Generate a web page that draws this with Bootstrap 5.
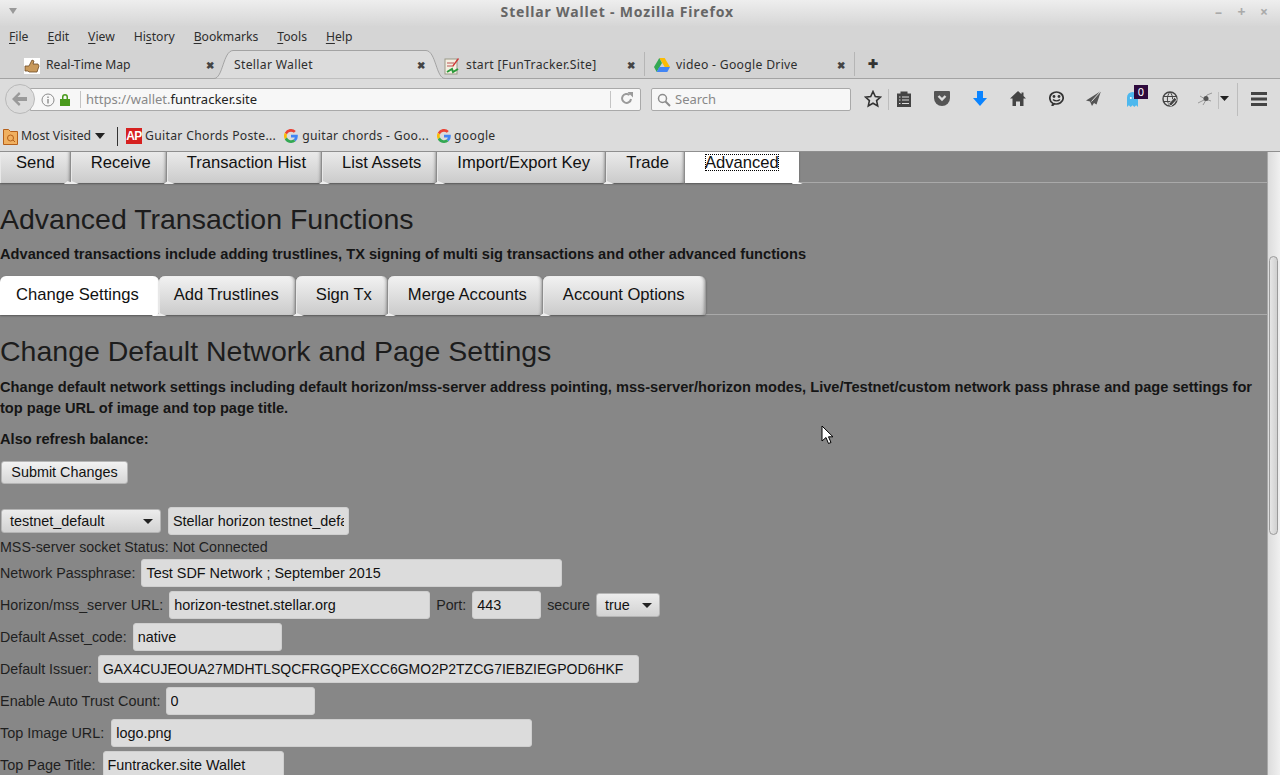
<!DOCTYPE html>
<html lang="en">
  <head>
    <meta charset="UTF-8" />
    <title>Stellar Wallet - Mozilla Firefox</title>
    <link href="https://cdn.jsdelivr.net/npm/bootstrap@5.3.2/dist/css/bootstrap.min.css" rel="stylesheet" />
    <style>
      html, body { height: 775px; overflow: hidden; background: #878787; }
      .ff-window { width: 1280px; height: 775px; font-family: "Noto Sans", sans-serif; font-size: 12.2px; color: #2e2e2e; }
      .ff-titlebar { height: 26px; background: linear-gradient(#eeeeee, #d6d6d6); padding: 0 9px 3px 8px; }
      .ff-title { flex: 1; text-align: center; font-size: 14px; font-weight: 700; color: #666; letter-spacing: 0.84px; padding-left: 13px; }
      .ff-winbtn { color: #aaa; font-size: 14px; font-weight: 700; margin-left: 11.5px; width: 11px; line-height: 1; }
      .ff-menubar { height: 24px; background: #d5d5d5; padding: 0 0 2px 9px; gap: 18.9px; }
      .ff-menubar u { text-underline-offset: 2px; }
      .ff-tabstrip { height: 29px; background: #d3d3d3; border-bottom: 1px solid #a3a3a3; padding-left: 24px; }
      .ff-tab { height: 28px; flex: none; position: relative; padding-top: 3px; }
      .ff-tab-x { font-size: 10px; font-weight: 700; color: #444; margin-left: auto; }
      .ff-tab1 { width: 193px; padding-right: 3px; }
      .ff-tab2 { width: 231px; margin-left: -3px; padding-left: 20px; padding-right: 20px; }
      .ff-tab3 { width: 202px; margin-left: -3px; padding-left: 2px; padding-right: 9px; }
      .ff-tab4 { width: 210px; padding-left: 9px; padding-right: 9px; border-left: 1px solid #b5b5b5; height: 24px; padding-top: 2px; }
      .ff-tab-curve { position: absolute; left: 0; top: 0; z-index: 0; }
      .ff-tab2 span { position: relative; z-index: 1; }
      .ff-tab-label { margin-left: 6px; }
      .ff-wide { letter-spacing: 0.3px; }
      .ff-newtab { border-left: 1px solid #b5b5b5; height: 24px; padding-left: 13px; font-weight: 700; font-size: 12px; color: #333; }
      .ff-navbar { height: 41px; background: #dcdcdc; position: relative; }
      .ff-back { position: absolute; left: 5px; top: 5px; width: 30px; height: 30px; border-radius: 50%; background: #dcdcdc; border: 1px solid #b9b9b9; z-index: 2; }
      .ff-urlbar { margin-left: 30px; width: 611px; height: 23px; background: #f7f7f7; border: 1px solid #a9a9a9; border-radius: 0 2px 2px 0; padding-left: 10px; font-size: 13px; }
      .ff-url { border-left: 1px solid #c4c4c4; padding-left: 5px; margin-left: 9px; color: #888; height: 17px; line-height: 17px; }
      .ff-url b { font-weight: 400; color: #222; }
      .ff-reload { margin-left: auto; border-left: 1px solid #c4c4c4; height: 17px; width: 30px; padding-left: 9px; }
      .ff-search { margin-left: 10px; width: 200px; height: 23px; background: #f7f7f7; border: 1px solid #a9a9a9; border-radius: 2px; padding-left: 5px; color: #888; gap: 4px; font-size: 13px; }
      .ff-tools { flex: 1; position: relative; height: 41px; }
      .ff-ico { position: absolute; top: 11px; }
      .ff-vsep { position: absolute; width: 1px; background: #bdbdbd; }
      .ff-badge { position: absolute; left: 283px; top: 6px; width: 14px; height: 14px; background: #2e0a3d; color: #fff; font-size: 11px; line-height: 14px; text-align: center; }
      .ff-bookmarks { height: 32px; background: #dcdcdc; border-bottom: 1px solid #8f8f8f; padding: 1px 0 0 3px; }
      .ff-bm-sep { width: 1px; height: 19px; background: #333; margin: 0 8px 0 12px; }
      .ff-ap { width: 16px; height: 16px; background: #d6201f; color: #fff; font: 700 12px/16px "Liberation Sans", sans-serif; text-align: center; letter-spacing: -0.5px; }
      .ff-gap3 { margin-left: 3px; }
      .ff-page { flex: 1; min-height: 0; position: relative; background: #878787; overflow: hidden; font-family: "Liberation Sans", Arial, sans-serif; font-size: 14.25px; color: #1f1f1f; }
      .ff-scroll { width: 13px; background: linear-gradient(90deg, #dcdcdc, #f0f0f0); padding: 104px 2px 0 1px; border-left: 1px solid #a8a8a8; }
      .ff-thumb { height: 279px; border: 1px solid #9a9a9a; border-radius: 5px; background: linear-gradient(90deg, #e6e6e6, #d0d0d0); }
      .wallet-body { margin-top: -8px; flex: 1; min-width: 0; }
      .wallet-tabs { border-bottom: 1px solid #a9a9a9; height: 39px; }
      .wallet-tab { height: 39px; padding: 0 15px 0 20px; font-size: 16.6px; color: #111; line-height: 37px; background: linear-gradient(#f2f2f2, #cbcbcb); border-right: 1px solid #9c9c9c; border-radius: 6px 6px 3px 0; position: relative; box-shadow: inset 1px 0 0 #e8e8e8, inset -3px 0 3px -2px rgba(0, 0, 0, 0.3), 0 1px 2px rgba(0, 0, 0, 0.35); }
      .wallet-tab::after { content: ""; position: absolute; left: -3px; bottom: -1px; width: 11px; height: 3px; background: #eee; clip-path: polygon(35% 0, 100% 100%, 0 100%); }
      .wallet-tab.on { background: #fff; border-right-color: #fff; padding-right: 19px; box-shadow: 0 1px 2px rgba(0, 0, 0, 0.35); }
      .wallet-tab.on::after { left: auto; right: -5px; background: #fff; }
      .wallet-tab.first { padding-left: 16px; }
      .wallet-tab.first::after { left: auto; right: -5px; }
      .wallet-tab.after-on { padding-left: 15px; padding-right: 16px; }
      .wallet-tab.last { padding-right: 20px; }
      .tab-focus { outline: 1px dotted #000; outline-offset: -1px; line-height: 17px; display: inline-block; }
      .wallet-h { font-size: 28.5px; font-weight: 400; line-height: 32px; margin: 20px 0 0; color: #1c1c1c; }
      .wallet-lead { font-size: 14.63px; font-weight: 700; line-height: 21px; margin: 0; color: #151515; }
      .wallet-btn { height: 23px; width: 127px; margin: 11px 0 0 1px; padding: 0; font-size: 14.4px; line-height: 21px; border: 1px solid #b5b5b5; border-radius: 3px; background: linear-gradient(#f2f2f2, #d6d6d6); color: #111; }
      .wallet-row { height: 32px; white-space: nowrap; gap: 6px; padding-top: 1px; }
      .row-big { font-size: 14.45px; gap: 7px; }
      .row-big.row-count { gap: 5px; }
      .wallet-input { height: 28px; font: 14.4px "Liberation Sans", Arial, sans-serif; color: #111; background: #dcdcdc; border: 1px solid #cfcfcf; border-radius: 3px; padding: 0 4px; outline: 0; }
      .wallet-row .wallet-input, .wallet-row .wallet-select { margin-top: -1px; }
      .wallet-select { position: relative; height: 24px; line-height: 23px; background: linear-gradient(#ececec, #d2d2d2); border: 1px solid #b5b5b5; border-radius: 3px; padding-left: 8px; color: #111; font-size: 14.4px; }
      .wallet-select::after { content: ""; position: absolute; right: 7px; top: 9px; border: 5px solid transparent; border-top-color: #222; border-bottom: 0; }
      .select-net { width: 160px; margin-left: 1px; } .select-secure { width: 64px; }
      .net-row { height: 28px; margin-top: 23px; } .status-row { height: 22px; padding-top: 3px; white-space: nowrap; }
      .w-pass { width: 421px; } .w-url { width: 261px; } .w-port { width: 69px; } .w-asset { width: 149px; }
      .w-issuer { width: 541px; font-size: 14px; } .w-count { width: 149px; } .w-image { width: 421px; } .w-title { width: 181px; } .w-net { width: 181px; margin-left: 7px; }
      .lead-a { margin-top: 9px; } .lead-b { margin-top: 10px; } .lead-c { margin-top: 10px; } .tabs-b { margin-top: 11px; }
      .ff-cursor { position: absolute; left: 821px; top: 273px; }
    </style>
  </head>
  <body>
    <div class="ff-window d-flex flex-column">
      <div class="ff-titlebar d-flex align-items-center">
        <svg width="10" height="7" viewBox="0 0 10 7"><path d="M1 0h8L5 6z" fill="#999"/></svg>
        <div class="ff-title">Stellar Wallet - Mozilla Firefox</div>
        <span class="ff-winbtn">–</span><span class="ff-winbtn">+</span><span class="ff-winbtn">×</span>
      </div>
      <div class="ff-menubar d-flex align-items-center">
        <span><u>F</u>ile</span><span><u>E</u>dit</span><span><u>V</u>iew</span><span>Hi<u>s</u>tory</span><span><u>B</u>ookmarks</span><span><u>T</u>ools</span><span><u>H</u>elp</span>
      </div>
      <div class="ff-tabstrip d-flex align-items-center">
        <div class="ff-tab ff-tab1 d-flex align-items-center">
          <svg width="16" height="16" viewBox="0 0 16 16"><rect width="16" height="16" fill="#fff"/><path d="M1 8h4l3-6 2 1-1 3h5l1 2-2 6H5l-1-1H1z" fill="#c99a5c" stroke="#6d4a25" stroke-width=".8"/></svg>
          <span class="ff-tab-label">Real-Time Map</span><span class="ff-tab-x">✖</span>
        </div>
        <div class="ff-tab ff-tab2 d-flex align-items-center">
          <svg class="ff-tab-curve" width="231" height="29" viewBox="0 0 231 29"><path d="M0 28.5C9 28.5 9 1 19 .5H212C222 1 222 28.5 231 28.5" fill="#dcdcdc" stroke="#a3a3a3"/></svg>
          <span class="ff-wide">Stellar Wallet</span><span class="ff-tab-x">✖</span>
        </div>
        <div class="ff-tab ff-tab3 d-flex align-items-center">
          <svg width="16" height="18" viewBox="0 0 16 18"><rect x="1" y="2" width="12" height="15" fill="#f4efe2" stroke="#998"/><path d="M3 6h7M3 9h5" stroke="#b55"/><path d="M3 15l5-3 1 3 5-3" stroke="#2a9a3a" stroke-width="2" fill="none"/><path d="M8 9l6-8 1 1-6 8z" fill="#c33"/></svg>
          <span class="ff-tab-label ff-wide">start [FunTracker.Site]</span><span class="ff-tab-x">✖</span>
        </div>
        <div class="ff-tab ff-tab4 d-flex align-items-center">
          <svg width="16" height="14" viewBox="0 0 16 14"><path d="M5.300 0h5.400L16 9h-5.300z" fill="#fbbc04"/><path d="M5.300 0L0 9l2.700 5L8 5z" fill="#34a853"/><path d="M2.700 14h10.600L16 9H5.300z" fill="#4285f4"/></svg>
          <span class="ff-tab-label ff-wide">video - Google Drive</span><span class="ff-tab-x">✖</span>
        </div>
        <div class="ff-newtab d-flex align-items-center">✚</div>
      </div>
      <div class="ff-navbar d-flex align-items-center">
        <div class="ff-back d-flex align-items-center justify-content-center">
          <svg width="16" height="14" viewBox="0 0 16 14"><path d="M7 0L0 7l7 7 1.500-2L5.500 9H15V5H5.500l3-3z" fill="#9a9a9a"/></svg>
        </div>
        <div class="ff-urlbar d-flex align-items-center">
          <svg width="14" height="14" viewBox="0 0 14 14"><circle cx="7" cy="7" r="6" fill="none" stroke="#8c8c8c"/><path d="M6.300 6h1.400v4.500H6.300zM6.300 3.500h1.400v1.400H6.300z" fill="#8c8c8c"/></svg>
          <svg class="ms-1" width="12" height="14" viewBox="0 0 12 14"><path d="M3 6V4a3 3 0 016 0v2h2v7H1V6zM4.500 6h3V4a1.500 1.500 0 00-3 0z" fill="#4a9a1d" fill-rule="evenodd"/></svg>
          <div class="ff-url">https://wallet.<b>funtracker.site</b></div>
          <div class="ff-reload"><svg class="d-block" width="13" height="14" viewBox="0 0 13 14"><path d="M11 8a4.500 4.500 0 11-1.500-4" fill="none" stroke="#9a9a9a" stroke-width="2"/><path d="M7.500 1H13v5.500z" fill="#9a9a9a"/></svg></div>
        </div>
        <div class="ff-search d-flex align-items-center">
          <svg width="14" height="14" viewBox="0 0 14 14"><circle cx="5.500" cy="5.500" r="4" fill="none" stroke="#8c8c8c" stroke-width="1.500"/><path d="M8.500 8.500L13 13" stroke="#8c8c8c" stroke-width="2"/></svg>
          <span>Search</span>
        </div>
        <div class="ff-tools">
          <svg class="ff-ico" style="left:13px" width="18" height="18" viewBox="0 0 18 18"><path d="M9 1.500l2.300 5 5.200.6-3.900 3.500 1.100 5.300L9 13.200 4.300 15.900l1.100-5.300L1.500 7.100l5.200-.6z" fill="none" stroke="#333" stroke-width="1.600"/></svg>
          <div class="ff-vsep" style="left:37px;top:10px;height:21px"></div>
          <svg class="ff-ico" style="left:46px;top:12px" width="14" height="16" viewBox="0 0 14 16"><path d="M0 2.500h3.500V.5h7v2H14V16H0z" fill="#444"/><path d="M5 6h7M5 9h7M5 12.500h7M2 6h1.500M2 9h1.500M2 12.500h1.500" stroke="#ddd"/></svg>
          <svg class="ff-ico" style="left:83px;top:12px" width="16" height="15" viewBox="0 0 16 15"><path d="M1 0h14a1 1 0 011 1v6a8 8 0 01-16 0V1a1 1 0 011-1z" fill="#555"/><path d="M4.500 5l3.500 3.500L11.500 5" fill="none" stroke="#dcdcdc" stroke-width="2.400"/></svg>
          <svg class="ff-ico" style="left:122px;top:12px" width="14" height="15" viewBox="0 0 14 15"><path d="M4 0h6v7h4l-7 8-7-8h4z" fill="#0a84ff"/></svg>
          <svg class="ff-ico" style="left:159px;top:12px" width="16" height="15" viewBox="0 0 16 15"><path d="M8 0L0 7.500h2.500V15H6v-4.500h4V15h3.500V7.500H16l-2.500-2.400V1.500h-2v1.700z" fill="#444"/></svg>
          <svg class="ff-ico" style="left:198px;top:12px" width="15" height="15" viewBox="0 0 15 15"><path d="M4 12.500C1.500 11 .8 9 .8 7A6.700 6 0 0114.200 7a6.700 6 0 01-8.700 5.700L3 15z" fill="#dcdcdc" stroke="#333" stroke-width="1.700"/><circle cx="5" cy="5.500" r="1.400" fill="#333"/><circle cx="10" cy="5.500" r="1.400" fill="#333"/><path d="M4 8.500c1.800 1.800 5.200 1.800 7 0" stroke="#333" stroke-width="1.300" fill="none"/></svg>
          <svg class="ff-ico" style="left:235px;top:12px" width="15" height="15" viewBox="0 0 15 15"><path d="M15 0L0 9.500l4 1 2 4.500 2-3 2.500 1.500z" fill="#555"/><path d="M15 0L5.500 10.500" stroke="#ddd"/></svg>
          <svg class="ff-ico" style="left:276px;top:13px" width="11" height="15" viewBox="0 0 11 15"><path d="M0 5.500a5.500 5.500 0 0111 0V15l-1.800-1.700L7.300 15 5.500 13.300 3.700 15l-1.900-1.700L0 15z" fill="#4db8ee"/><circle cx="3.800" cy="6" r="1" fill="#fff"/><circle cx="7.500" cy="6" r="1" fill="#fff"/></svg>
          <div class="ff-badge">0</div>
          <svg class="ff-ico" style="left:311px;top:12px" width="16" height="16" viewBox="0 0 16 16"><circle cx="8" cy="8" r="7" fill="none" stroke="#444" stroke-width="1.400"/><path d="M1.500 5.500h13M1.500 10.500h13M8 1C4.500 5 4.500 11 8 15M8 1c3.500 4 3.500 10 0 14" fill="none" stroke="#444"/><path d="M6.500 13l6-6.500 2.500 2L9 15z" fill="#444" stroke="#dcdcdc" stroke-width=".9"/></svg>
          <svg class="ff-ico" style="left:346px;top:13px" width="16" height="14" viewBox="0 0 16 14"><path d="M1 11l6-3 3-5 5-2M3 4l5 3 6 2M6 13l3-5" stroke="#999" fill="none"/><circle cx="9" cy="6.500" r="2.500" fill="#555"/></svg>
          <div class="ff-vsep" style="left:367px;top:13px;height:17px"></div>
          <svg class="ff-ico" style="left:369px;top:17px" width="9" height="5" viewBox="0 0 9 5"><path d="M0 0h9L4.500 5z" fill="#222"/></svg>
          <div class="ff-vsep" style="left:386px;top:4px;height:33px"></div>
          <svg class="ff-ico" style="left:400px;top:13px" width="16" height="14" viewBox="0 0 16 14"><path d="M0 1.500h16M0 7h16M0 12.500h16" stroke="#444" stroke-width="3"/></svg>
        </div>
      </div>
      <div class="ff-bookmarks d-flex align-items-center">
        <svg width="15" height="17" viewBox="0 0 15 17"><path d="M.5 1.500h5l2 2h7v13H.5z" fill="#f0b060" stroke="#b5601a"/><circle cx="7.500" cy="10" r="3" fill="none" stroke="#b5601a"/><path d="M10 12l2 2" stroke="#b5601a"/></svg>
        <span class="ff-gap3">Most Visited</span>
        <svg class="ms-1" width="10" height="6" viewBox="0 0 10 6"><path d="M0 0h10L5 6z" fill="#222"/></svg>
        <div class="ff-bm-sep"></div>
        <div class="ff-ap">AP</div>
        <span class="ff-gap3 ff-wide">Guitar Chords Poste...</span>
        <svg class="ms-2" width="14" height="14" viewBox="0 0 14 14"><path d="M7 2.700a4.300 4.300 0 012.900 1.100l1.900-1.900A7 7 0 00.800 3.800L3 5.500A4.200 4.200 0 017 2.700z" fill="#ea4335"/><path d="M13.800 7.200c0-.5 0-1-.1-1.400H7v2.700h3.800a3.200 3.200 0 01-1.400 2.100l2.200 1.700a6.700 6.700 0 002.200-5.100z" fill="#4285f4"/><path d="M3 8.500a4.200 4.200 0 010-3L.8 3.800a7 7 0 000 6.400z" fill="#fbbc05"/><path d="M7 14a6.800 6.800 0 004.600-1.700l-2.200-1.700A4.300 4.300 0 013 8.500L.8 10.200A7 7 0 007 14z" fill="#34a853"/></svg>
        <span class="ms-1 ff-wide">guitar chords - Goo...</span>
        <svg class="ms-2" width="14" height="14" viewBox="0 0 14 14"><path d="M7 2.700a4.300 4.300 0 012.900 1.100l1.900-1.900A7 7 0 00.800 3.800L3 5.500A4.200 4.200 0 017 2.700z" fill="#ea4335"/><path d="M13.800 7.200c0-.5 0-1-.1-1.400H7v2.700h3.800a3.200 3.200 0 01-1.400 2.100l2.200 1.700a6.700 6.700 0 002.200-5.100z" fill="#4285f4"/><path d="M3 8.500a4.200 4.200 0 010-3L.8 3.800a7 7 0 000 6.400z" fill="#fbbc05"/><path d="M7 14a6.800 6.800 0 004.600-1.700l-2.200-1.700A4.300 4.300 0 013 8.500L.8 10.200A7 7 0 007 14z" fill="#34a853"/></svg>
        <span class="ff-gap3 ff-wide">google</span>
      </div>
      <div class="ff-page d-flex">
        <div class="wallet-body">
          <div class="wallet-tabs d-flex">
            <div class="wallet-tab first">Send</div>
            <div class="wallet-tab">Receive</div>
            <div class="wallet-tab">Transaction Hist</div>
            <div class="wallet-tab">List Assets</div>
            <div class="wallet-tab">Import/Export Key</div>
            <div class="wallet-tab">Trade</div>
            <div class="wallet-tab on"><span class="tab-focus">Advanced</span></div>
          </div>
          <h1 class="wallet-h">Advanced Transaction Functions</h1>
          <p class="wallet-lead lead-a">Advanced transactions include adding trustlines, TX signing of multi sig transactions and other advanced functions</p>
          <div class="wallet-tabs tabs-b d-flex">
            <div class="wallet-tab on first">Change Settings</div>
            <div class="wallet-tab after-on">Add Trustlines</div>
            <div class="wallet-tab">Sign Tx</div>
            <div class="wallet-tab">Merge Accounts</div>
            <div class="wallet-tab last">Account Options</div>
          </div>
          <h2 class="wallet-h">Change Default Network and Page Settings</h2>
          <p class="wallet-lead lead-b">Change default network settings including default horizon/mss-server address pointing, mss-server/horizon modes, Live/Testnet/custom network pass phrase and page settings for top page URL of image and top page title.</p>
          <p class="wallet-lead lead-c">Also refresh balance:</p>
          <button class="wallet-btn d-block">Submit Changes</button>
          <div class="net-row d-flex align-items-center">
            <div class="wallet-select select-net">testnet_default</div>
            <input class="wallet-input w-net" value="Stellar horizon testnet_default" />
          </div>
          <div class="status-row d-flex align-items-center">MSS-server socket Status: Not Connected</div>
          <div class="wallet-row d-flex align-items-center">Network Passphrase: <input class="wallet-input w-pass" value="Test SDF Network ; September 2015" /></div>
          <div class="wallet-row d-flex align-items-center">Horizon/mss_server URL: <input class="wallet-input w-url" value="horizon-testnet.stellar.org" /> Port: <input class="wallet-input w-port" value="443" /> secure <div class="wallet-select select-secure">true</div></div>
          <div class="wallet-row d-flex align-items-center">Default Asset_code: <input class="wallet-input w-asset" value="native" /></div>
          <div class="wallet-row d-flex align-items-center">Default Issuer: <input class="wallet-input w-issuer" value="GAX4CUJEOUA27MDHTLSQCFRGQPEXCC6GMO2P2TZCG7IEBZIEGPOD6HKF" /></div>
          <div class="wallet-row row-big row-count d-flex align-items-center">Enable Auto Trust Count: <input class="wallet-input w-count" value="0" /></div>
          <div class="wallet-row row-big d-flex align-items-center">Top Image URL: <input class="wallet-input w-image" value="logo.png" /></div>
          <div class="wallet-row row-big d-flex align-items-center">Top Page Title: <input class="wallet-input w-title" value="Funtracker.site Wallet" /></div>
        </div>
        <div class="ff-scroll"><div class="ff-thumb"></div></div>
        <svg class="ff-cursor" width="13" height="19" viewBox="0 0 13 19"><path d="M1 1v15l4-3.500 2.500 6 2.500-1-2.500-5.700H12z" fill="#fff" stroke="#000"/></svg>
      </div>
    </div>
    <script src="https://cdn.jsdelivr.net/npm/bootstrap@5.3.2/dist/js/bootstrap.bundle.min.js"></script>
  </body>
</html>
